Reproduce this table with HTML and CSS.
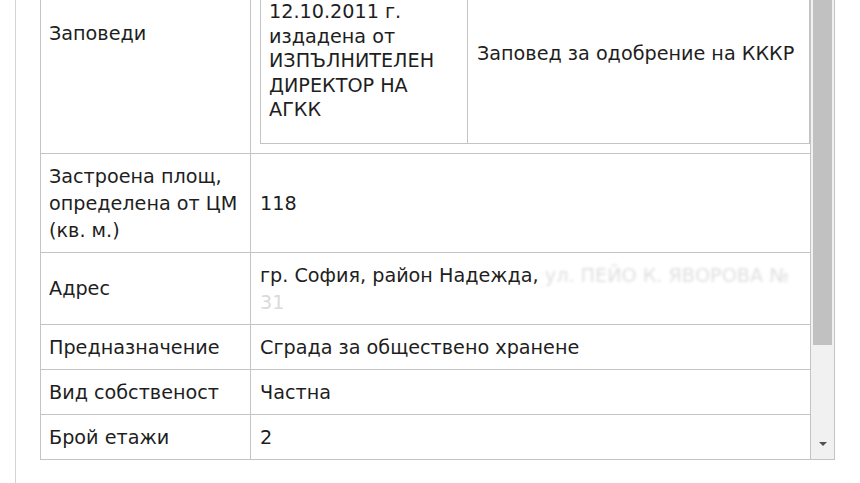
FILE: index.html
```html
<!DOCTYPE html>
<html lang="bg">
<head>
<meta charset="utf-8">
<title>Сграда</title>
<link rel="stylesheet" href="styles.css">
</head>
<body>
<div class="panel">
  <div class="box">
    <div class="viewport">
      <table class="props">
        <colgroup><col class="c-label"><col class="c-value"></colgroup>
        <tbody>
          <tr>
            <td class="label">Заповеди</td>
            <td class="nested">
              <table class="orders">
                <colgroup><col class="o-doc"><col class="o-kind"></colgroup>
                <tbody>
                  <tr><td>Номер и дата</td><td class="kind">Вид</td></tr>
                  <tr>
                    <td class="doc">№ РД-18-60 /<br>12.10.2011 г. издадена от ИЗПЪЛНИТЕЛЕН ДИРЕКТОР НА АГКК</td>
                    <td class="kind">Заповед за одобрение на КККР</td>
                  </tr>
                </tbody>
              </table>
            </td>
          </tr>
          <tr>
            <td class="label">Застроена площ, определена от ЦМ (кв. м.)</td>
            <td>118</td>
          </tr>
          <tr>
            <td class="label">Адрес</td>
            <td>гр. София, район Надежда, <span class="blur">ул. ПЕЙО К. ЯВОРОВА №</span> <span class="faint">31</span></td>
          </tr>
          <tr>
            <td class="label">Предназначение</td>
            <td>Сграда за обществено хранене</td>
          </tr>
          <tr>
            <td class="label">Вид собственост</td>
            <td>Частна</td>
          </tr>
          <tr class="last">
            <td class="label">Брой етажи</td>
            <td>2</td>
          </tr>
        </tbody>
      </table>
    </div>
    <div class="scrollbar">
      <div class="thumb"></div>
      <div class="track-end"><span class="arrow-down"></span></div>
    </div>
  </div>
</div>
</body>
</html>
```

FILE: styles.css
```css
html, body {
  margin: 0;
  padding: 0;
  background: #ffffff;
  overflow: hidden;
}

body {
  font-family: "DejaVu Sans", Verdana, sans-serif;
  font-size: 19.2px;
  color: #1e1e1e;
  height: 483px;
}

.panel {
  margin-left: 15px;
  border-left: 1px solid #d4d4d4;
  padding-left: 24px;
  height: 483px;
}

.box {
  display: flex;
  width: 795px;
  height: 460px;
  box-sizing: border-box;
  border-right: 1px solid #c4c4c4;
  border-bottom: 1px solid #c4c4c4;
}

.viewport {
  flex: 1;
  min-width: 0;
  overflow: hidden;
}

.props {
  width: 100%;
  margin-top: -88px;
  border-collapse: collapse;
  table-layout: fixed;
}

.props .c-label { width: 210px; }

.props td {
  border: 1px solid #c4c4c4;
  padding: 9px 9px 8px 9px;
  line-height: 27px;
  vertical-align: middle;
  text-align: left;
}

.props tr.last td {
  border-bottom: none;
}

.props td.label {
  padding-left: 8px;
}

.props td.nested {
  padding: 9px 0 9px 9px;
}

.orders {
  width: 100%;
  border-collapse: collapse;
  table-layout: fixed;
}

.orders .o-doc { width: 207px; }

.orders td {
  border: 1px solid #c4c4c4;
  padding: 9px 8px;
  line-height: 24.5px;
  vertical-align: middle;
}

.orders td.doc {
  padding-bottom: 20px;
}

.orders td.kind {
  padding-left: 9px;
}

.blur {
  color: transparent;
  text-shadow: 0 0 3px rgba(0, 0, 0, 0.13);
}

.faint {
  color: #dadada;
}

.scrollbar {
  width: 23px;
  display: flex;
  flex-direction: column;
  background: #f1f1f1;
}

.thumb {
  flex: 1;
  margin: 0 2px;
  background: #c1c1c1;
}

.track-end {
  height: 114px;
  display: flex;
  align-items: flex-end;
  justify-content: center;
  padding-bottom: 13px;
  box-sizing: border-box;
}

.arrow-down {
  width: 0;
  height: 0;
  border-left: 4px solid transparent;
  border-right: 4px solid transparent;
  border-top: 4px solid #505050;
}
```
